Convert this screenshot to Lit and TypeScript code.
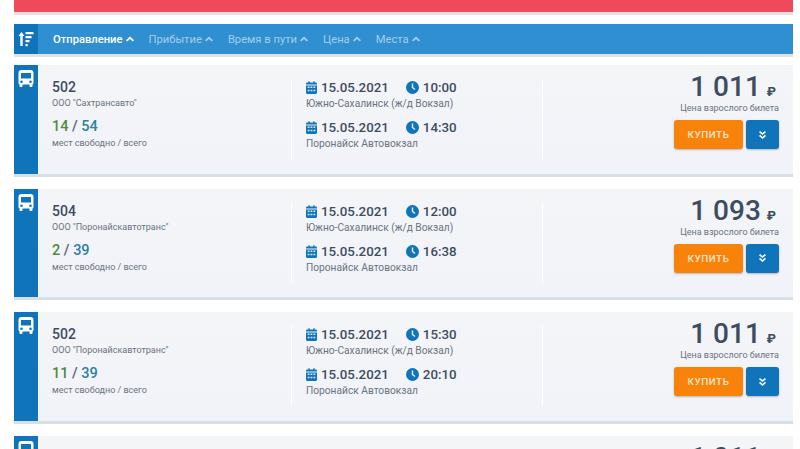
import { LitElement, html, css, svg } from 'lit';
import { customElement } from 'lit/decorators.js';

type Trip = {
  route: string;
  carrier: string;
  free: number;
  total: number;
  depDate: string;
  depTime: string;
  depPlace: string;
  arrTime: string;
  arrPlace: string;
  price: string;
};

const trips: Trip[] = [
  { route: '502', carrier: 'ООО "Сахтрансавто"', free: 14, total: 54, depDate: '15.05.2021', depTime: '10:00', depPlace: 'Южно-Сахалинск (ж/д Вокзал)', arrTime: '14:30', arrPlace: 'Поронайск Автовокзал', price: '1 011' },
  { route: '504', carrier: 'ООО "Поронайскавтотранс"', free: 2, total: 39, depDate: '15.05.2021', depTime: '12:00', depPlace: 'Южно-Сахалинск (ж/д Вокзал)', arrTime: '16:38', arrPlace: 'Поронайск Автовокзал', price: '1 093' },
  { route: '502', carrier: 'ООО "Поронайскавтотранс"', free: 11, total: 39, depDate: '15.05.2021', depTime: '15:30', depPlace: 'Южно-Сахалинск (ж/д Вокзал)', arrTime: '20:10', arrPlace: 'Поронайск Автовокзал', price: '1 011' },
  { route: '502', carrier: 'ООО "Сахтрансавто"', free: 14, total: 54, depDate: '15.05.2021', depTime: '18:00', depPlace: 'Южно-Сахалинск (ж/д Вокзал)', arrTime: '22:30', arrPlace: 'Поронайск Автовокзал', price: '1 011' },
];

const sorts = ['Отправление', 'Прибытие', 'Время в пути', 'Цена', 'Места'];

const chevron = svg`<path d="M1 6.200 5 2.600l4 3.600-1.200 1.200L5 4.900 2.200 7.400z" fill="currentColor"/>`;

const calendar = html`<svg class="ico" width="11" height="13" viewBox="0 0 11 13"><path fill="#0f74ba" d="M0 4.400h11v7.400a1.100 1.100 0 0 1-1.100 1.100H1.100A1.100 1.100 0 0 1 0 11.800zM1.100 1.600H2.400V.3h1.300v1.300h3.600V.3h1.300v1.300h1.300A1.100 1.100 0 0 1 11 2.700v.8H0v-.8a1.100 1.100 0 0 1 1.100-1.100z"/><path fill="#dfe9f3" d="M1.700 5.600h1.800v1.500H1.700zM4.600 5.600h1.800v1.500H4.600zM7.500 5.600h1.800v1.500H7.500zM1.700 8.800h1.800v1.500H1.700zM4.600 8.800h1.800v1.500H4.600zM7.500 8.800h1.800v1.500H7.500z"/></svg>`;

const clock = html`<svg class="ico" width="13" height="13" viewBox="0 0 13 13"><circle cx="6.500" cy="6.500" r="6.500" fill="#0f74ba"/><path d="M5.800 2.600h1.400v3.600l2.200 1.700-.8 1-2.800-2.100z" fill="#f1f4fa"/></svg>`;

@customElement('app-root')
export class AppRoot extends LitElement {
  static styles = css`
    :host {
      display: block;
      height: 449px;
      overflow: hidden;
      background: #fff;
      font-family: Roboto, 'Liberation Sans', sans-serif;
      color: #3d4c60;
    }

    .page {
      padding: 0 7px 0 14px;
    }

    .alert {
      height: 12px;
      background: #ef4a5c;
      border-bottom: 3px solid #e3dfe4;
      margin-bottom: 9px;
    }

    .sort-bar {
      display: flex;
      height: 30px;
      background: #2f8fd0;
      border-bottom: 3px solid #dfe3e6;
      margin-bottom: 8px;
    }

    .sort-icon {
      width: 24px;
      background: #0f74ba;
      display: flex;
      align-items: center;
      justify-content: center;
    }

    .sort-items {
      display: flex;
      align-items: center;
      gap: 14px;
      padding-left: 15px;
      font-size: 11.200px;
      color: #a6cdea;
    }

    .sort-items span {
      display: flex;
      align-items: center;
      gap: 2px;
    }

    .sort-items .active {
      color: #fff;
      font-weight: 500;
    }

    .card {
      display: flex;
      height: 108.500px;
      background: linear-gradient(180deg, #f4f5f7, #f1f3fa);
      border-bottom: 3px solid #d7dfe3;
      margin-bottom: 12px;
    }

    .side {
      width: 24px;
      flex: none;
      background: #0f74ba;
      display: flex;
      justify-content: center;
      padding-top: 5px;
      box-sizing: border-box;
    }

    .body {
      flex: 1;
      display: grid;
      grid-template-columns: 253px 252px 1fr;
      align-items: start;
      height: 80px;
      margin-top: 14px;
    }

    .info {
      padding-left: 14px;
    }

    .route {
      font-size: 14px;
      font-weight: 500;
      line-height: 17px;
    }

    .small {
      font-size: 9px;
      line-height: 14px;
      color: #6a7380;
    }

    .seats {
      font-size: 14.500px;
      font-weight: 500;
      line-height: 17px;
      margin: 8px 0 1px;
      color: #566373;
    }

    .free {
      color: #4f8b3d;
    }

    .total {
      color: #2f7f9f;
    }

    .times {
      height: 80px;
      padding-left: 14px;
      border-left: 1px solid #fff;
      border-right: 1px solid #fff;
      box-sizing: border-box;
    }

    .stop + .stop {
      margin-top: 9px;
    }

    .when {
      display: flex;
      align-items: center;
      font-size: 13.300px;
      font-weight: 500;
      line-height: 17px;
    }

    .ico {
      flex: none;
      margin-right: 4px;
    }

    .when .time {
      margin-left: 17px;
      display: flex;
      align-items: center;
    }

    .place {
      font-size: 10.200px;
      line-height: 13px;
      padding-top: 1px;
      color: #6a7380;
    }

    .buy {
      display: flex;
      flex-direction: column;
      align-items: flex-end;
      padding-right: 14px;
      margin-top: -7px;
    }

    .price {
      height: 29px;
      font-size: 28px;
      font-weight: 500;
      line-height: 29px;
      display: flex;
      align-items: baseline;
      gap: 6px;
    }

    .price i {
      font-style: normal;
      font-size: 13px;
      font-weight: 700;
      margin-right: 3px;
    }

    .actions {
      display: flex;
      gap: 3px;
      margin-top: 5px;
    }

    button {
      height: 29px;
      border: none;
      border-radius: 3px;
      color: #fff;
      font-family: inherit;
      padding: 0;
      box-shadow: 0 1px 2px rgba(0, 0, 0, 0.25);
    }

    .go {
      width: 69px;
      background: #f8830a;
      color: #fde6cc;
      font-size: 9.800px;
      font-weight: 500;
      letter-spacing: 0.6px;
    }

    .more {
      width: 33px;
      background: #0f74ba;
      display: flex;
      align-items: center;
      justify-content: center;
    }
  `;

  renderTrip(t: Trip) {
    return html`
      <div class="card">
        <div class="side">
          <svg width="16" height="17" viewBox="0 0 16 17">
            <path fill="#fff" fill-rule="evenodd" d="M3.500 0h9A3 3 0 0 1 15.500 3v10a1.500 1.500 0 0 1-1 1.400V16a1 1 0 0 1-1 1h-1a1 1 0 0 1-1-1v-1.500h-7V16a1 1 0 0 1-1 1h-1a1 1 0 0 1-1-1v-1.600a1.500 1.500 0 0 1-1-1.400V3a3 3 0 0 1 3-3zM3 3v5.500h10V3zM3.500 10.500a1.300 1.300 0 1 0 0 2.600 1.300 1.300 0 0 0 0-2.600zm9 0a1.300 1.300 0 1 0 0 2.600 1.300 1.300 0 0 0 0-2.600z"/>
          </svg>
        </div>
        <div class="body">
          <div class="info">
            <div class="route">${t.route}</div>
            <div class="small">${t.carrier}</div>
            <div class="seats"><span class="free">${t.free}</span> / <span class="total">${t.total}</span></div>
            <div class="small">мест свободно / всего</div>
          </div>
          <div class="times">
            <div class="stop">
              <div class="when">${calendar}${t.depDate}<span class="time">${clock}${t.depTime}</span></div>
              <div class="place">${t.depPlace}</div>
            </div>
            <div class="stop">
              <div class="when">${calendar}${t.depDate}<span class="time">${clock}${t.arrTime}</span></div>
              <div class="place">${t.arrPlace}</div>
            </div>
          </div>
          <div class="buy">
            <div class="price">${t.price}<i>₽</i></div>
            <div class="small">Цена взрослого билета</div>
            <div class="actions">
              <button class="go">КУПИТЬ</button>
              <button class="more">
                <svg width="7" height="8" viewBox="0 0 7 8">
                  <path fill="#fff" d="M0 1.200 1.100 0 3.500 2.100 5.900 0 7 1.200 3.500 4.100zM0 5 1.100 3.800 3.500 5.900 5.900 3.800 7 5 3.500 8z"/>
                </svg>
              </button>
            </div>
          </div>
        </div>
      </div>
    `;
  }

  render() {
    return html`
      <div class="page">
        <div class="alert"></div>
        <div class="sort-bar">
          <div class="sort-icon">
            <svg width="16" height="16" viewBox="0 0 16 16">
              <path fill="#fff" d="M3.500 1 6.500 5H4.700v10H2.300V5H.5zM7.500 1h8v2.200h-8zM7.500 5h6v2.200h-6zM7.500 9h4v2.200h-4zM7.500 13h2.200v2.200H7.500z"/>
            </svg>
          </div>
          <div class="sort-items">
            ${sorts.map(
              (s, i) => html`<span class=${i === 0 ? 'active' : ''}>${s}<svg width="10" height="10" viewBox="0 0 10 10">${chevron}</svg></span>`
            )}
          </div>
        </div>
        ${trips.map((t) => this.renderTrip(t))}
      </div>
    `;
  }
}
